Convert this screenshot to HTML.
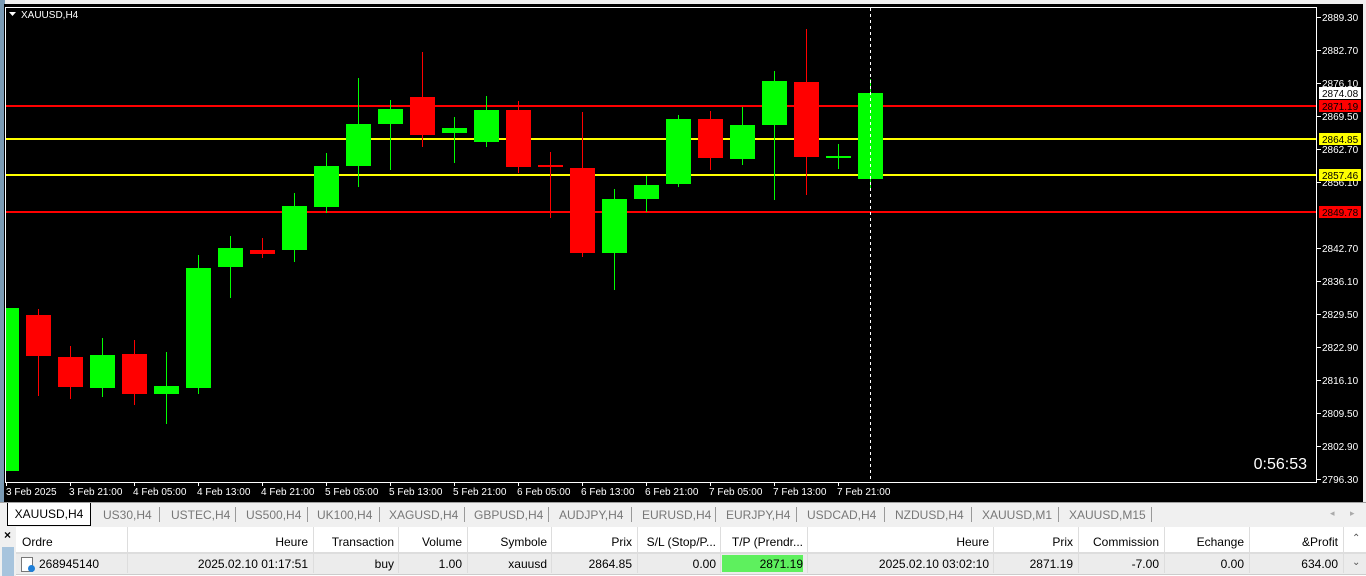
<!DOCTYPE html>
<html><head><meta charset="utf-8"><style>
body{margin:0;width:1366px;height:576px;overflow:hidden;background:#f0f0f0;font-family:"Liberation Sans",sans-serif;position:relative}
#chart{position:absolute;left:0;top:0}
.tabs{position:absolute;left:0;top:502px;width:1366px;height:24px;background:#f0f0f0;border-top:1px solid #a0a0a0;font-size:12px;color:#777}
.tab{position:absolute;top:5px}
.sep{position:absolute;top:4px;width:1px;height:15px;background:#999}
.act{position:absolute;left:7px;top:0;width:82px;height:22px;background:#fff;border:1px solid #000;border-top:none;color:#000;font-size:12px;line-height:22px;text-align:center}
.tbl{position:absolute;left:0;top:527px;width:1366px;height:49px;background:#fff;font-size:12px;color:#000}
.c{position:absolute;white-space:nowrap}
</style></head><body>
<svg id="chart" width="1366" height="502" xmlns="http://www.w3.org/2000/svg" font-family="Liberation Sans, sans-serif">
<rect width="1366" height="502" fill="#f0f0f0"/>
<rect x="0" y="0" width="5" height="502" fill="#7a9ab4"/>
<rect x="4" y="4" width="1359" height="498" fill="#000"/>
<rect x="5.5" y="7.5" width="1311" height="475" fill="none" stroke="#fff"/>
<polygon points="9,12 16,12 12.5,16" fill="#fff"/>
<text x="21" y="18" fill="#fff" font-size="10">XAUUSD,H4</text>
<g stroke-width="1">
<line x1="6" y1="106" x2="1316" y2="106" stroke="#f00" stroke-width="2"/>
<line x1="6" y1="139" x2="1316" y2="139" stroke="#ff0" stroke-width="2"/>
<line x1="6" y1="175" x2="1316" y2="175" stroke="#ff0" stroke-width="2"/>
<line x1="6" y1="212" x2="1316" y2="212" stroke="#f00" stroke-width="2"/>
</g>
<g fill="#0f0">
<rect x="6" y="308" width="13" height="163"/>
<rect x="102" y="338" width="1" height="59"/><rect x="90" y="355" width="25" height="33"/>
<rect x="166" y="352" width="1" height="72"/><rect x="154" y="386" width="25" height="8"/>
<rect x="198" y="255" width="1" height="139"/><rect x="186" y="268" width="25" height="120"/>
<rect x="230" y="236" width="1" height="62"/><rect x="218" y="248" width="25" height="19"/>
<rect x="294" y="193" width="1" height="69"/><rect x="282" y="206" width="25" height="44"/>
<rect x="326" y="153" width="1" height="60"/><rect x="314" y="166" width="25" height="41"/>
<rect x="358" y="78" width="1" height="109"/><rect x="346" y="124" width="25" height="42"/>
<rect x="390" y="100" width="1" height="70"/><rect x="378" y="109" width="25" height="15"/>
<rect x="454" y="117" width="1" height="46"/><rect x="442" y="128" width="25" height="5"/>
<rect x="486" y="96" width="1" height="51"/><rect x="474" y="110" width="25" height="32"/>
<rect x="614" y="189" width="1" height="101"/><rect x="602" y="199" width="25" height="54"/>
<rect x="646" y="176" width="1" height="36"/><rect x="634" y="185" width="25" height="14"/>
<rect x="678" y="115" width="1" height="72"/><rect x="666" y="119" width="25" height="65"/>
<rect x="742" y="107" width="1" height="58"/><rect x="730" y="125" width="25" height="34"/>
<rect x="774" y="71" width="1" height="129"/><rect x="762" y="81" width="25" height="44"/>
<rect x="838" y="144" width="1" height="25"/><rect x="826" y="156" width="25" height="2"/>
<rect x="870" y="79" width="1" height="109"/><rect x="858" y="93" width="25" height="86"/>
</g>
<g fill="#f00">
<rect x="38" y="309" width="1" height="87"/><rect x="26" y="315" width="25" height="41"/>
<rect x="70" y="346" width="1" height="53"/><rect x="58" y="357" width="25" height="30"/>
<rect x="134" y="340" width="1" height="65"/><rect x="122" y="354" width="25" height="40"/>
<rect x="262" y="238" width="1" height="20"/><rect x="250" y="250" width="25" height="4"/>
<rect x="422" y="52" width="1" height="95"/><rect x="410" y="97" width="25" height="38"/>
<rect x="518" y="101" width="1" height="72"/><rect x="506" y="110" width="25" height="57"/>
<rect x="550" y="152" width="1" height="66"/><rect x="538" y="165" width="25" height="2"/>
<rect x="582" y="112" width="1" height="145"/><rect x="570" y="168" width="25" height="85"/>
<rect x="710" y="111" width="1" height="59"/><rect x="698" y="119" width="25" height="39"/>
<rect x="806" y="29" width="1" height="166"/><rect x="794" y="82" width="25" height="75"/>
</g>
<line x1="870.5" y1="8" x2="870.5" y2="482" stroke="#fff" stroke-dasharray="3,3"/>
<g fill="#fff" font-size="10">
<g stroke="#fff"><line x1="1317" y1="17.5" x2="1321" y2="17.5"/><line x1="1317" y1="50.5" x2="1321" y2="50.5"/><line x1="1317" y1="83.5" x2="1321" y2="83.5"/><line x1="1317" y1="116.5" x2="1321" y2="116.5"/><line x1="1317" y1="149.5" x2="1321" y2="149.5"/><line x1="1317" y1="182.5" x2="1321" y2="182.5"/><line x1="1317" y1="248.5" x2="1321" y2="248.5"/><line x1="1317" y1="281.5" x2="1321" y2="281.5"/><line x1="1317" y1="314.5" x2="1321" y2="314.5"/><line x1="1317" y1="347.5" x2="1321" y2="347.5"/><line x1="1317" y1="380.5" x2="1321" y2="380.5"/><line x1="1317" y1="413.5" x2="1321" y2="413.5"/><line x1="1317" y1="446.5" x2="1321" y2="446.5"/><line x1="1317" y1="479.5" x2="1321" y2="479.5"/></g>
<text x="1322" y="21">2889.30</text><text x="1322" y="54">2882.70</text><text x="1322" y="87">2876.10</text><text x="1322" y="120">2869.50</text><text x="1322" y="153">2862.70</text><text x="1322" y="186">2856.10</text><text x="1322" y="252">2842.70</text><text x="1322" y="285">2836.10</text><text x="1322" y="318">2829.50</text><text x="1322" y="351">2822.90</text><text x="1322" y="384">2816.10</text><text x="1322" y="417">2809.50</text><text x="1322" y="450">2802.90</text><text x="1322" y="483">2796.30</text>
</g>
<rect x="1319" y="87" width="42" height="12" fill="#fff"/><text x="1322" y="97" font-size="10" fill="#000">2874.08</text>
<rect x="1319" y="100" width="42" height="12" fill="#f00"/><text x="1322" y="110" font-size="10" fill="#000">2871.19</text>
<rect x="1319" y="133" width="42" height="12" fill="#ff0"/><text x="1322" y="143" font-size="10" fill="#000">2864.85</text>
<rect x="1319" y="169" width="42" height="12" fill="#ff0"/><text x="1322" y="179" font-size="10" fill="#000">2857.46</text>
<rect x="1319" y="206" width="42" height="12" fill="#f00"/><text x="1322" y="216" font-size="10" fill="#000">2849.78</text>
<text x="1307" y="469" fill="#fff" font-size="16" text-anchor="end">0:56:53</text>
<g stroke="#fff"><line x1="6.5" y1="482" x2="6.5" y2="486"/><line x1="70.5" y1="482" x2="70.5" y2="486"/><line x1="134.5" y1="482" x2="134.5" y2="486"/><line x1="198.5" y1="482" x2="198.5" y2="486"/><line x1="262.5" y1="482" x2="262.5" y2="486"/><line x1="326.5" y1="482" x2="326.5" y2="486"/><line x1="390.5" y1="482" x2="390.5" y2="486"/><line x1="454.5" y1="482" x2="454.5" y2="486"/><line x1="518.5" y1="482" x2="518.5" y2="486"/><line x1="582.5" y1="482" x2="582.5" y2="486"/><line x1="646.5" y1="482" x2="646.5" y2="486"/><line x1="710.5" y1="482" x2="710.5" y2="486"/><line x1="774.5" y1="482" x2="774.5" y2="486"/><line x1="838.5" y1="482" x2="838.5" y2="486"/></g>
<g fill="#fff" font-size="10">
<text x="6" y="495">3 Feb 2025</text><text x="69" y="495">3 Feb 21:00</text><text x="133" y="495">4 Feb 05:00</text><text x="197" y="495">4 Feb 13:00</text><text x="261" y="495">4 Feb 21:00</text><text x="325" y="495">5 Feb 05:00</text><text x="389" y="495">5 Feb 13:00</text><text x="453" y="495">5 Feb 21:00</text><text x="517" y="495">6 Feb 05:00</text><text x="581" y="495">6 Feb 13:00</text><text x="645" y="495">6 Feb 21:00</text><text x="709" y="495">7 Feb 05:00</text><text x="773" y="495">7 Feb 13:00</text><text x="837" y="495">7 Feb 21:00</text>
</g>
</svg>
<div class="tabs">
<div class="act">XAUUSD,H4</div>
<span class="tab" style="left:103px">US30,H4</span><div class="sep" style="left:159px"></div>
<span class="tab" style="left:171px">USTEC,H4</span><div class="sep" style="left:235px"></div>
<span class="tab" style="left:246px">US500,H4</span><div class="sep" style="left:307px"></div>
<span class="tab" style="left:317px">UK100,H4</span><div class="sep" style="left:379px"></div>
<span class="tab" style="left:389px">XAGUSD,H4</span><div class="sep" style="left:464px"></div>
<span class="tab" style="left:474px">GBPUSD,H4</span><div class="sep" style="left:548px"></div>
<span class="tab" style="left:559px">AUDJPY,H4</span><div class="sep" style="left:631px"></div>
<span class="tab" style="left:642px">EURUSD,H4</span><div class="sep" style="left:715px"></div>
<span class="tab" style="left:726px">EURJPY,H4</span><div class="sep" style="left:796px"></div>
<span class="tab" style="left:807px">USDCAD,H4</span><div class="sep" style="left:884px"></div>
<span class="tab" style="left:895px">NZDUSD,H4</span><div class="sep" style="left:971px"></div>
<span class="tab" style="left:982px">XAUUSD,M1</span><div class="sep" style="left:1058px"></div>
<span class="tab" style="left:1069px">XAUUSD,M15</span><div class="sep" style="left:1151px"></div>
<span class="tab" style="left:1330px;font-size:9px;color:#aaa">◂</span><span class="tab" style="left:1350px;font-size:9px;color:#aaa">▸</span>
</div>
<div class="tbl">
<div class="c" style="left:0;top:0;width:16px;height:49px;background:#f0f0f0"></div>
<div class="c" style="left:4px;top:1px;font-size:12px;font-weight:bold">×</div>
<div class="c" style="left:2px;top:20px;width:12px;height:29px;background:#a7c4dd"></div>
<div class="c" style="left:16px;top:26px;width:1350px;height:20px;background:#ececec;border-top:1px solid #ddd;border-bottom:1px solid #ccc"></div>
<div class="c" style="left:16px;top:25px;width:1350px;height:1px;background:#ddd"></div>
<div class="c" style="left:127px;top:0;width:1px;height:46px;background:#ddd"></div>
<div class="c" style="left:313px;top:0;width:1px;height:46px;background:#ddd"></div>
<div class="c" style="left:398px;top:0;width:1px;height:46px;background:#ddd"></div>
<div class="c" style="left:467px;top:0;width:1px;height:46px;background:#ddd"></div>
<div class="c" style="left:551px;top:0;width:1px;height:46px;background:#ddd"></div>
<div class="c" style="left:637px;top:0;width:1px;height:46px;background:#ddd"></div>
<div class="c" style="left:720px;top:0;width:1px;height:46px;background:#ddd"></div>
<div class="c" style="left:807px;top:0;width:1px;height:46px;background:#ddd"></div>
<div class="c" style="left:993px;top:0;width:1px;height:46px;background:#ddd"></div>
<div class="c" style="left:1078px;top:0;width:1px;height:46px;background:#ddd"></div>
<div class="c" style="left:1164px;top:0;width:1px;height:46px;background:#ddd"></div>
<div class="c" style="left:1249px;top:0;width:1px;height:46px;background:#ddd"></div>
<div class="c" style="left:1343px;top:0;width:1px;height:46px;background:#ddd"></div>
<div class="c" style="left:722px;top:28px;width:81px;height:17px;background:#5ef05e"></div>
<div class="c" style="left:22px;top:8px">Ordre</div>
<div class="c" style="right:1058px;top:8px">Heure</div>
<div class="c" style="right:972px;top:8px">Transaction</div>
<div class="c" style="right:904px;top:8px">Volume</div>
<div class="c" style="right:819px;top:8px">Symbole</div>
<div class="c" style="right:734px;top:8px">Prix</div>
<div class="c" style="right:650px;top:8px">S/L (Stop/P...</div>
<div class="c" style="right:563px;top:8px">T/P (Prendr...</div>
<div class="c" style="right:377px;top:8px">Heure</div>
<div class="c" style="right:293px;top:8px">Prix</div>
<div class="c" style="right:207px;top:8px">Commission</div>
<div class="c" style="right:122px;top:8px">Echange</div>
<div class="c" style="right:28px;top:8px">&amp;Profit</div>
<div class="c" style="left:21px;top:30px;width:10px;height:13px;border:1px solid #777;background:#fff"></div>
<div class="c" style="left:28px;top:38px;width:7px;height:7px;border-radius:50%;background:#1e7fd8"></div>
<div class="c" style="left:39px;top:30px">268945140</div>
<div class="c" style="right:1058px;top:30px">2025.02.10 01:17:51</div>
<div class="c" style="right:972px;top:30px">buy</div>
<div class="c" style="right:904px;top:30px">1.00</div>
<div class="c" style="right:819px;top:30px">xauusd</div>
<div class="c" style="right:734px;top:30px">2864.85</div>
<div class="c" style="right:650px;top:30px">0.00</div>
<div class="c" style="right:563px;top:30px">2871.19</div>
<div class="c" style="right:377px;top:30px">2025.02.10 03:02:10</div>
<div class="c" style="right:293px;top:30px">2871.19</div>
<div class="c" style="right:207px;top:30px">-7.00</div>
<div class="c" style="right:122px;top:30px">0.00</div>
<div class="c" style="right:28px;top:30px">634.00</div>
<div class="c" style="left:1352px;top:6px;font-size:10px;color:#555">⌃</div>
<div class="c" style="left:1352px;top:30px;font-size:10px;color:#555">⌄</div>
</div>
</body></html>
